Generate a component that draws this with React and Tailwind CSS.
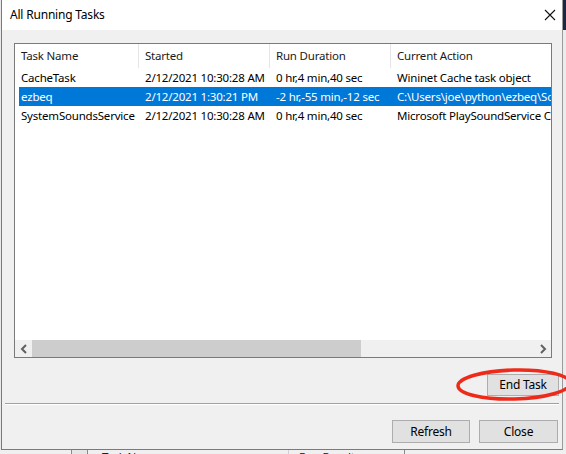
import React from 'react'

const rows = [
  { name: 'CacheTask', started: '2/12/2021 10:30:28 AM', dur: '0 hr,4 min,40 sec', action: 'Wininet Cache task object' },
  { name: 'ezbeq', started: '2/12/2021 1:30:21 PM', dur: '-2 hr,-55 min,-12 sec', action: 'C:\\Users\\joe\\python\\ezbeq\\Scripts\\ezbeq.exe', selected: true },
  { name: 'SystemSoundsService', started: '2/12/2021 10:30:28 AM', dur: '0 hr,4 min,40 sec', action: 'Microsoft PlaySoundService Class' },
]

function Chevron({ dir }) {
  return (
    <svg width="8" height="10" viewBox="0 0 8 10">
      <path
        d={dir === 'left' ? 'M6 1 L2 5 L6 9' : 'M2 1 L6 5 L2 9'}
        fill="none"
        stroke="#606060"
        strokeWidth="2"
      />
    </svg>
  )
}

export default function App() {
  return (
    <div className="relative w-[566px] h-[454px] overflow-hidden bg-[#f0f0f0] font-['Segoe_UI','Noto_Sans',sans-serif] text-[11.5px] tracking-[-0.2px] text-black">
      <div className="flex h-[450px]">
        <div className="w-[1px] bg-[#e8e8e8]" />
        <div className="w-[562px] flex flex-col border-l border-b border-r border-[#7a7a7a] border-r-[#9a9a9a]">
          {/* title bar */}
          <div className="h-[30px] bg-white flex items-center justify-between pl-[8px] pr-[6px]">
            <span className="leading-none text-[12px]">All Running Tasks</span>
            <svg width="12" height="12" viewBox="0 0 12 12">
              <path d="M1 1 L11 11 M11 1 L1 11" stroke="#111" strokeWidth="1.1" />
            </svg>
          </div>

          <div className="flex-1 bg-[#f0f0f0] flex flex-col">
            {/* list view */}
            <div className="mt-[13px] ml-[12px] w-[538px] h-[315px] border border-[#7a7a7a] bg-white flex flex-col overflow-hidden">
              <div className="flex h-[24px] items-center text-[#1a1a1a]">
                <div className="w-[124px] h-full flex items-center pl-[6px] border-r border-[#e5e5e5]">Task Name</div>
                <div className="w-[131px] h-full flex items-center pl-[6px] border-r border-[#e5e5e5]">Started</div>
                <div className="w-[121px] h-full flex items-center pl-[6px] border-r border-[#e5e5e5]">Run Duration</div>
                <div className="flex-1 h-full flex items-center pl-[6px]">Current Action</div>
              </div>
              <div className="flex-1 flex flex-col">
                {rows.map((r) => (
                  <div
                    key={r.name}
                    className={
                      'ml-[4px] flex h-[19px] items-center whitespace-nowrap overflow-hidden ' +
                      (r.selected ? 'bg-[#0078d7] text-white' : '')
                    }
                  >
                    <div className="w-[120px] shrink-0 pl-[2px] overflow-hidden">{r.name}</div>
                    <div className="w-[131px] shrink-0 pl-[6px] overflow-hidden">{r.started}</div>
                    <div className="w-[121px] shrink-0 pl-[6px] overflow-hidden">{r.dur}</div>
                    <div className="flex-1 pl-[6px] overflow-hidden">{r.action}</div>
                  </div>
                ))}
              </div>
              {/* horizontal scrollbar */}
              <div className="h-[17px] flex bg-[#f0f0f0]">
                <div className="w-[17px] flex items-center justify-center">
                  <Chevron dir="left" />
                </div>
                <div className="w-[329px] bg-[#cdcdcd]" />
                <div className="flex-1" />
                <div className="w-[17px] flex items-center justify-center">
                  <Chevron dir="right" />
                </div>
              </div>
            </div>

            <div className="flex justify-end mt-[16px] pr-[3px]">
              <button className="w-[72px] h-[22px] bg-[#e1e1e1] border border-[#adadad] leading-none text-[12px]">End Task</button>
            </div>

            <div className="mt-[7px] ml-[3px] mr-[3px] h-[2px] border-t border-[#a0a0a0] border-b border-b-white" />

            <div className="flex justify-end gap-[9px] mt-[15px] pr-[4px]">
              <button className="w-[78px] h-[23px] bg-[#e1e1e1] border border-[#adadad] leading-none text-[12px]">Refresh</button>
              <button className="w-[79px] h-[23px] bg-[#e1e1e1] border border-[#adadad] leading-none text-[12px]">Close</button>
            </div>
          </div>
        </div>
        {/* background window on the right */}
        <div className="flex-1 flex flex-col">
          <div className="h-[30px] bg-[#1c2841]" />
          <div className="flex-1 bg-[#ececec]" />
        </div>
      </div>

      {/* background window below */}
      <div className="h-[4px] flex overflow-hidden bg-[#f0f0f0] text-[#222]">
        <div className="w-[72px] border-r border-[#8a8a8a]" />
        <div className="w-[16px] border-r border-[#8a8a8a] bg-[#e6e6e6]" />
        <div className="w-[200px] pl-[14px] leading-none pt-[1px]">Task Name</div>
        <div className="w-[116px] pl-[10px] border-l border-[#d0d0d0] leading-none pt-[1px]">Run Result</div>
        <div className="flex-1 border-l border-[#8a8a8a]" />
      </div>

      {/* red annotation ellipse */}
      <svg className="absolute left-0 top-0 pointer-events-none" width="566" height="454">
        <ellipse cx="514" cy="384.5" rx="56" ry="14.5" fill="none" stroke="#ee2a1b" strokeWidth="3.5" transform="rotate(-1.5 514 384.5)" />
      </svg>
    </div>
  )
}
